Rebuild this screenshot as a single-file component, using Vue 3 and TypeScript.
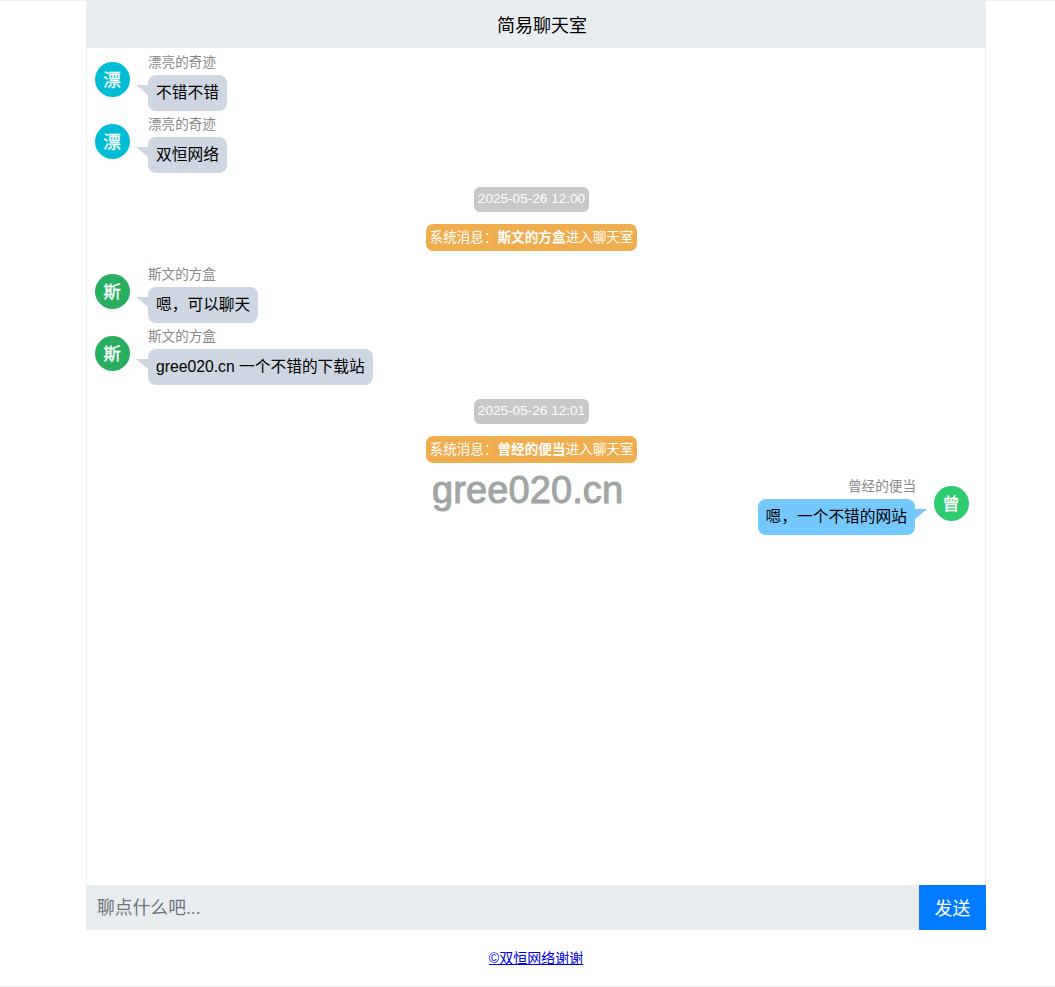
<script setup lang="ts">
type Item =
  | { kind: 'msg'; side: 'left' | 'right'; name: string; text: string; color: string }
  | { kind: 'time'; text: string }
  | { kind: 'sys'; user: string }

const items: Item[] = [
  { kind: 'msg', side: 'left', name: '漂亮的奇迹', text: '不错不错', color: '#00bcd4' },
  { kind: 'msg', side: 'left', name: '漂亮的奇迹', text: '双恒网络', color: '#00bcd4' },
  { kind: 'time', text: '2025-05-26 12:00' },
  { kind: 'sys', user: '斯文的方盒' },
  { kind: 'msg', side: 'left', name: '斯文的方盒', text: '嗯，可以聊天', color: '#27ae60' },
  { kind: 'msg', side: 'left', name: '斯文的方盒', text: 'gree020.cn 一个不错的下载站', color: '#27ae60' },
  { kind: 'time', text: '2025-05-26 12:01' },
  { kind: 'sys', user: '曾经的便当' },
  { kind: 'msg', side: 'right', name: '曾经的便当', text: '嗯，一个不错的网站', color: '#2ecc71' }
]
</script>

<template>
  <div class="page">
    <div class="chat">
      <header class="title">简易聊天室</header>
      <main class="list">
        <template v-for="(item, i) in items" :key="i">
          <div v-if="item.kind === 'msg'" class="row" :class="item.side">
            <div class="avatar" :style="{ background: item.color }">{{ item.name[0] }}</div>
            <div class="body">
              <div class="name">{{ item.name }}</div>
              <div class="bubble">{{ item.text }}</div>
            </div>
          </div>
          <div v-else-if="item.kind === 'time'" class="center time-line">
            <span class="time">{{ item.text }}</span>
          </div>
          <div v-else class="center sys-line">
            <span class="sys">系统消息：<b>{{ item.user }}</b>进入聊天室</span>
          </div>
        </template>
        <div class="watermark">gree020.cn</div>
      </main>
      <div class="composer">
        <input class="input" type="text" placeholder="聊点什么吧..." />
        <button class="send" type="button">发送</button>
      </div>
    </div>
    <footer class="footer"><a href="#">©双恒网络谢谢</a></footer>
  </div>
</template>

<style>
html,
body {
  margin: 0;
  padding: 0;
  background: #fff;
}
</style>

<style scoped>
.page {
  box-sizing: border-box;
  height: 987px;
  display: flex;
  flex-direction: column;
  border-top: 1px solid #eee;
  border-bottom: 1px solid #eee;
  font-family: "Liberation Sans", "Noto Sans CJK SC", sans-serif;
  color: #000;
  overflow: hidden;
}
.chat {
  flex: 1;
  min-height: 0;
  width: 900px;
  margin-left: 86px;
  display: flex;
  flex-direction: column;
}
.title {
  height: 47px;
  flex: none;
  display: flex;
  align-items: center;
  justify-content: center;
  padding: 0 0 2px 12px;
  box-sizing: border-box;
  background: #eaedf0;
  font-size: 18px;
}
.list {
  position: relative;
  flex: 1;
  min-height: 0;
  box-sizing: border-box;
  padding: 7px 16px 0 8px;
  border-left: 1px solid #eee;
  border-right: 1px solid #eee;
  display: flex;
  flex-direction: column;
}
.row {
  display: flex;
  align-items: flex-start;
  margin-bottom: 6px;
}
.row.right {
  flex-direction: row-reverse;
}
.avatar {
  width: 35px;
  height: 35px;
  margin-top: 7px;
  padding: 0 1px 2px 0;
  box-sizing: border-box;
  border-radius: 50%;
  flex: none;
  display: flex;
  align-items: center;
  justify-content: center;
  color: #fff;
  font-size: 17.6px;
  font-weight: 400;
  -webkit-text-stroke: 0.3px #fff;
}
.body {
  display: flex;
  flex-direction: column;
  align-items: flex-start;
  margin-left: 18px;
}
.right .body {
  align-items: flex-end;
  margin-left: 0;
  margin-right: 18px;
}
.name {
  font-size: 13.6px;
  line-height: 16px;
  height: 20px;
  color: #888;
}
.bubble {
  position: relative;
  padding: 8px;
  font-size: 15.72px;
  line-height: 20px;
  border-radius: 8px;
  background: #cdd6e1;
}
.right .bubble {
  margin-right: 1px;
  background: #75c8fb;
}
.bubble::before {
  content: "";
  position: absolute;
  top: 10px;
  left: -12px;
  width: 0;
  height: 0;
  border-top: 10px solid #cdd6e1;
  border-left: 12px solid transparent;
}
.right .bubble::before {
  left: auto;
  right: -12px;
  border-top-color: #75c8fb;
  border-left: 0;
  border-right: 12px solid transparent;
}
.center {
  display: flex;
  justify-content: center;
  padding-right: 1px;
}
.time-line {
  margin-top: 8px;
  margin-bottom: 12px;
}
.sys-line {
  margin-bottom: 16px;
}
.time {
  box-sizing: border-box;
  height: 25px;
  padding: 0 3.7px;
  line-height: 23px;
  font-size: 13.6px;
  color: #fff;
  background: #c8c8c8;
  border-radius: 6px;
}
.sys {
  box-sizing: border-box;
  height: 27px;
  padding: 0 3.7px;
  line-height: 27px;
  font-size: 13.6px;
  color: #fff;
  background: #f0ad4e;
  border-radius: 7px;
}
.sys b {
  font-weight: 700;
}
.watermark {
  position: absolute;
  left: 345px;
  top: 419px;
  font-size: 38px;
  line-height: 46px;
  letter-spacing: 0.1px;
  font-weight: 400;
  -webkit-text-stroke: 1px #a0a5a4;
  color: #a0a5a4;
  pointer-events: none;
}
.composer {
  flex: none;
  height: 45px;
  display: flex;
}
.input {
  flex: 1;
  min-width: 0;
  box-sizing: border-box;
  height: 45px;
  padding: 2px 11px 0;
  border: 0;
  outline: 0;
  background: #eaedf0;
  font-family: inherit;
  font-size: 17.8px;
  color: #495057;
}
.input::placeholder {
  color: #6c757d;
  opacity: 1;
}
.send {
  flex: none;
  width: 67px;
  height: 45px;
  padding: 0 0 2px;
  border: 0;
  background: #007bff;
  color: #fff;
  font-family: inherit;
  font-size: 18px;
}
.footer {
  flex: none;
  height: 56px;
  margin-left: 86px;
  width: 900px;
  box-sizing: border-box;
  padding: 0 0 2px;
  display: flex;
  align-items: center;
  justify-content: center;
  font-size: 14px;
}
.footer a {
  color: #00e;
  text-decoration: underline;
}
</style>
